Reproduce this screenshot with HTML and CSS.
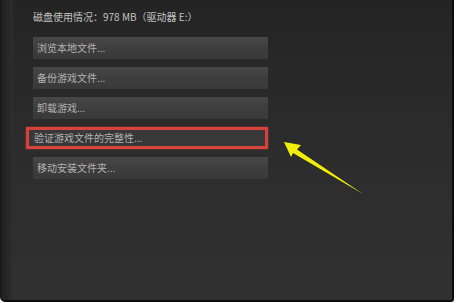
FILE: index.html
```html
<!DOCTYPE html>
<html>
<head>
<meta charset="utf-8">
<link rel="stylesheet" href="styles.css">
</head>
<body>
<div class="frame">
  <div class="panel">
    <div class="usage">磁盘使用情况：978 MB（驱动器 E:）</div>
    <div class="buttons">
      <div class="btn">浏览本地文件...</div>
      <div class="btn">备份游戏文件...</div>
      <div class="btn">卸载游戏...</div>
      <div class="btn highlighted">验证游戏文件的完整性...</div>
      <div class="btn">移动安装文件夹...</div>
    </div>
  </div>
  <svg class="arrow" width="456" height="303" viewBox="0 0 456 303">
    <polygon points="284,142 301,145 297,149.5 363,194 293,153 291,157" fill="#f2ee0a"/>
  </svg>
</div>
</body>
</html>
```
FILE: styles.css
```css
html, body {
  margin: 0;
  padding: 0;
  background: #ffffff;
}
.frame {
  position: relative;
  width: 454px;
  height: 302px;
  box-sizing: border-box;
  border-right: 2px solid #0c0c0c;
  border-bottom: 2px solid #0c0c0c;
  border-left: 2px solid #1a1a1a;
  border-bottom-left-radius: 5px;
  border-bottom-right-radius: 3px;
  background: linear-gradient(to bottom, #242424 0%, #2b2b2b 40%, #313131 100%);
  overflow: hidden;
  font-family: "Noto Sans CJK SC", "Liberation Sans", sans-serif;
}
.panel {
  height: 100%;
  box-sizing: border-box;
  padding: 7px 0 0 31px;
  background: linear-gradient(to right, #222 0px, #262626 6px, #2d2d2d 9px, rgba(0,0,0,0) 13px);
}
.usage {
  height: 22px;
  line-height: 20px;
  font-size: 10px;
  color: #c2c2c2;
  margin-bottom: 8px;
}
.buttons {
  display: flex;
  flex-direction: column;
  gap: 8px;
  width: 235px;
}
.btn {
  height: 22px;
  box-sizing: border-box;
  padding-left: 4px;
  line-height: 22px;
  font-size: 10px;
  color: #b4b4b4;
  background: linear-gradient(to bottom, #474747 0%, #3e3e3e 50%, #393939 100%);
}
.btn.highlighted {
  margin-left: -7px;
  padding-left: 5px;
  line-height: 16px;
  border: 3px solid #d8423d;
  background: #383838;
  box-shadow: 0 0 2px rgba(216, 66, 61, 0.6);
}
.arrow {
  position: absolute;
  left: -2px;
  top: 0;
}
```
